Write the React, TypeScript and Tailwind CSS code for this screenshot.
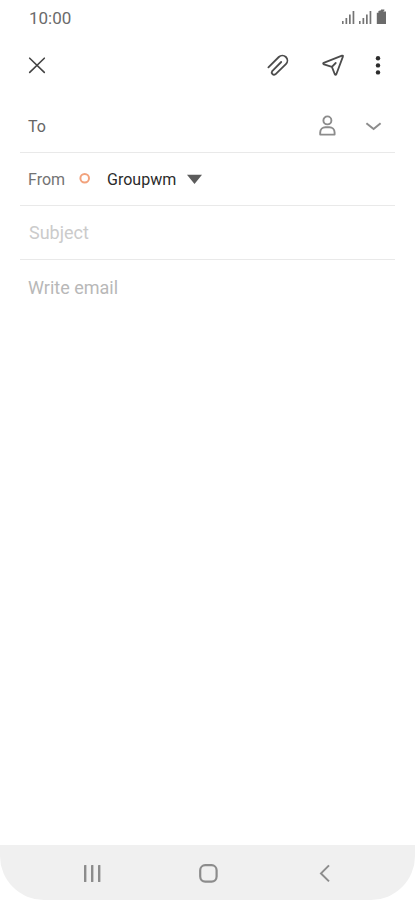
import React, { useState } from "react";

const Signal = () => (
  <svg width="13" height="14" viewBox="0 0 13 14" fill="#747474">
    <rect x="0" y="11" width="1.6" height="3" />
    <rect x="3.5" y="8" width="1.7" height="6" />
    <rect x="7" y="4.5" width="1.7" height="9.5" />
    <rect x="10.6" y="1" width="1.7" height="13" />
  </svg>
);

const StatusBar = () => (
  <div className="flex h-9 items-center justify-between px-7 text-[#6b6b6b]">
    <span className="pl-px text-[17px] leading-6">10:00</span>
    <div className="flex items-end gap-1 pb-1">
      <Signal />
      <Signal />
      <svg width="11" height="16" viewBox="0 0 11 16" fill="#6b6b6b">
        <path d="M.8 4.8h1.6V3L5 2.2v-.8h3.4v1L7.2 3.4H10V16H.8z" />
      </svg>
    </div>
  </div>
);

const Toolbar = () => (
  <header className="flex h-[58px] items-center justify-between px-6">
    <button type="button" aria-label="Close">
      <svg
        width="26"
        height="26"
        viewBox="0 0 26 26"
        stroke="#444"
        strokeWidth="1.6"
        strokeLinecap="round"
      >
        <path d="M5.7 6.2l14.6 14.2M20.3 6.2L5.7 20.4" />
      </svg>
    </button>
    <div className="flex items-center">
      <button type="button" aria-label="Attach" className="mr-8">
        <svg
          width="24"
          height="24"
          viewBox="0 0 24 24"
          fill="none"
          stroke="#4c4c4c"
          strokeWidth="1.8"
          strokeLinecap="round"
          strokeLinejoin="round"
        >
          <path d="M3.4 14.4L13.8 4a5 5 0 0 1 7.1 7.1L10.4 21.3a2.3 2.3 0 0 1-3.2-3.2l9-9.1" />
        </svg>
      </button>
      <button type="button" aria-label="Send" className="mr-5">
        <svg
          width="24"
          height="24"
          viewBox="0 0 24 24"
          fill="none"
          stroke="#4c4c4c"
          strokeWidth="1.8"
          strokeLinecap="round"
          strokeLinejoin="round"
        >
          <path d="M2.7 9.8L21 2.6q1.3-.3.9 1L15.4 21q-.8 1.6-1.7 0l-2.8-7.2-7.9-2.4q-1.5-.8-.3-1.6zM10.9 13.8l3.8-3.8" />
        </svg>
      </button>
      <button type="button" aria-label="More options">
        <svg width="26" height="24" viewBox="0 0 26 24" fill="#2b2b2b">
          <circle cx="13" cy="5.2" r="2.2" />
          <circle cx="13" cy="12.4" r="2.2" />
          <circle cx="13" cy="19.4" r="2.2" />
        </svg>
      </button>
    </div>
  </header>
);

const NavBar = () => (
  <nav className="flex h-[55px] items-center justify-between rounded-b-[44px] bg-[#f0f0f0] px-20">
    <button type="button" aria-label="Recent apps">
      <svg width="24" height="24" viewBox="0 0 24 24" fill="#8c8c8c">
        <rect x="4" y="4" width="2.4" height="17" rx=".6" />
        <rect x="11" y="4" width="2.4" height="17" rx=".6" />
        <rect x="18" y="4" width="2.4" height="17" rx=".6" />
      </svg>
    </button>
    <button type="button" aria-label="Home">
      <svg
        width="24"
        height="24"
        viewBox="0 0 24 24"
        fill="none"
        stroke="#8c8c8c"
        strokeWidth="2.2"
      >
        <rect x="4.2" y="4.2" width="16.4" height="16.4" rx="5" />
      </svg>
    </button>
    <button type="button" aria-label="Back">
      <svg
        width="24"
        height="24"
        viewBox="0 0 24 24"
        fill="none"
        stroke="#8c8c8c"
        strokeWidth="2"
      >
        <path d="M18 4.4l-8 8 8 8" />
      </svg>
    </button>
  </nav>
);

const App = () => {
  const [to, setTo] = useState("");
  const [from, setFrom] = useState("Groupwm");
  const [subject, setSubject] = useState("");
  const [body, setBody] = useState("");

  return (
    <div className="flex min-h-screen flex-col bg-white font-['Roboto',sans-serif]">
      <StatusBar />
      <Toolbar />
      <form
        className="flex grow flex-col px-5 pt-1.5"
        onSubmit={(e) => e.preventDefault()}
      >
        <div className="flex h-[53px] items-center border-b border-[#e9e9e9] pr-3 pl-2">
          <label htmlFor="to" className="pt-0.5 text-base text-[#666]">
            To
          </label>
          <input
            id="to"
            type="text"
            value={to}
            onChange={(e) => setTo(e.target.value)}
            autoComplete="off"
            className="ml-4 min-w-0 grow pt-0.5 text-base text-[#333] outline-none"
          />
          <button type="button" aria-label="Contacts" className="mr-6">
            <svg
              width="20"
              height="24"
              viewBox="0 0 20 24"
              fill="none"
              stroke="#8c8c8c"
              strokeWidth="1.9"
              strokeLinejoin="round"
            >
              <circle cx="8.4" cy="6.4" r="4" />
              <path d="M1.2 20.6v-2.1c0-3 2.4-5.2 5.2-5.2h4c2.8 0 5.2 2.2 5.2 5.2v2.1z" />
            </svg>
          </button>
          <button type="button" aria-label="Show Cc and Bcc">
            <svg
              width="20"
              height="24"
              viewBox="0 0 20 24"
              fill="none"
              stroke="#8c8c8c"
              strokeWidth="2"
            >
              <path d="M3.4 9.2l7.2 5.8 7-5.8" />
            </svg>
          </button>
        </div>

        <div className="flex h-[53px] items-center border-b border-[#e9e9e9] pl-2">
          <label htmlFor="from" className="pt-0.5 text-base text-[#737373]">
            From
          </label>
          <svg
            width="12"
            height="12"
            viewBox="0 0 12 12"
            fill="none"
            stroke="#f2a27c"
            strokeWidth="2"
            className="ml-3.5"
          >
            <circle cx="5.7" cy="5.3" r="4.3" />
          </svg>
          <div className="ml-4 flex items-center">
            <select
              id="from"
              value={from}
              onChange={(e) => setFrom(e.target.value)}
              className="appearance-none pt-0.5 text-base text-[#2b2b2b] outline-none"
            >
              <option>Groupwm</option>
            </select>
            <svg
              width="16"
              height="10"
              viewBox="0 0 16 10"
              fill="#5c5c5c"
              className="pointer-events-none ml-2.5"
            >
              <path d="M0 .8h15L7.5 10z" />
            </svg>
          </div>
        </div>

        <div className="flex h-[54px] items-center border-b border-[#e9e9e9] px-2">
          <input
            type="text"
            aria-label="Subject"
            placeholder="Subject"
            value={subject}
            onChange={(e) => setSubject(e.target.value)}
            className="w-full pl-px text-lg text-[#333] outline-none placeholder:text-[#cbcbcb]"
          />
        </div>

        <textarea
          aria-label="Email body"
          placeholder="Write email"
          value={body}
          onChange={(e) => setBody(e.target.value)}
          className="w-full grow resize-none px-2 pt-3.5 text-lg text-[#333] outline-none placeholder:text-[#b8b8b8]"
        />
      </form>
      <NavBar />
    </div>
  );
};

export default App;
